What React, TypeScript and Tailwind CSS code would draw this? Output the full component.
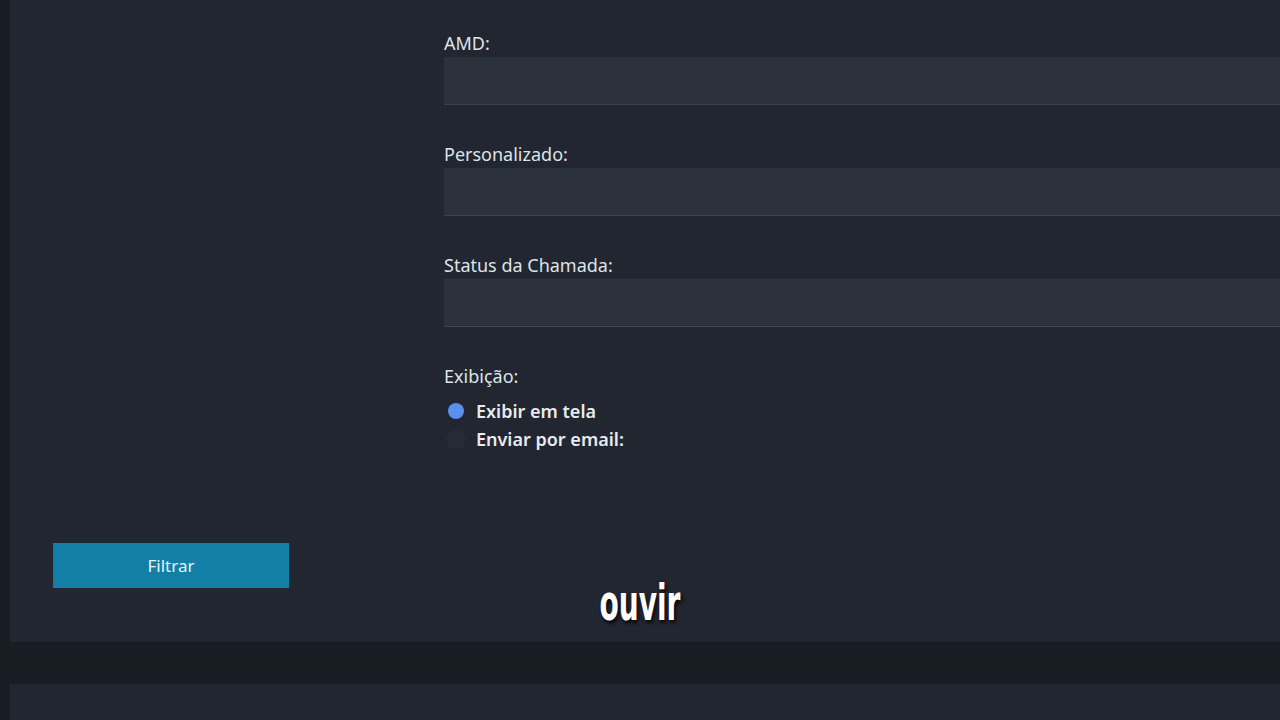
export default function App() {
  const fields = ['AMD:', 'Personalizado:', 'Status da Chamada:'];

  return (
    <div className="relative w-[1280px] h-[720px] overflow-hidden bg-[#181d23] pl-[10px] font-['Noto_Sans','Open_Sans',sans-serif]">
      {/* Main filter panel */}
      <div className="flex h-[642px] bg-[#212630]">
        {/* Left column */}
        <div className="flex w-[434px] flex-col justify-end pb-[54px] pl-[43px]">
          <button className="h-[45px] w-[236px] bg-[#137fa6] text-[17px] text-[#e6f4fa]">
            Filtrar
          </button>
        </div>

        {/* Right column */}
        <div className="flex-1 pt-[31px]">
          {fields.map((label) => (
            <div key={label} className="mb-[37px]">
              <div className="mb-[2px] text-[18px] leading-[24px] text-[#dfe3e8]">{label}</div>
              <div className="h-[48px] border-b border-[#3b424c] bg-[#2b323c]" />
            </div>
          ))}

          <div className="text-[18px] leading-[24px] text-[#dfe3e8]">Exibição:</div>
          <div className="mt-[9px] flex flex-col pl-[4px]">
            <label className="flex h-[28px] items-center gap-[12px] text-[18px] font-semibold text-[#e8ebef]">
              <span className="h-[16px] w-[16px] rounded-full bg-[#5b8fee]" />
              Exibir em tela
            </label>
            <label className="flex h-[28px] items-center gap-[12px] text-[18px] font-semibold text-[#e8ebef]">
              <span className="-ml-[2px] -mr-[2px] h-[20px] w-[20px] rounded-full bg-[#252b35]" />
              Enviar por email:
            </label>
          </div>
        </div>
      </div>

      {/* Lower panel */}
      <div className="mt-[42px] h-[40px] bg-[#212630]" />

      {/* Video caption */}
      <div className="absolute left-0 right-0 top-[578px] text-center">
        <span className="inline-block scale-x-[0.78] scale-y-[1.25] font-['Liberation_Sans_Narrow','DejaVu_Sans_Condensed',sans-serif] text-[40px] font-bold leading-[48px] text-white [text-shadow:2px_3px_4px_rgba(0,0,0,0.8)]">
          ouvir
        </span>
      </div>
    </div>
  );
}
